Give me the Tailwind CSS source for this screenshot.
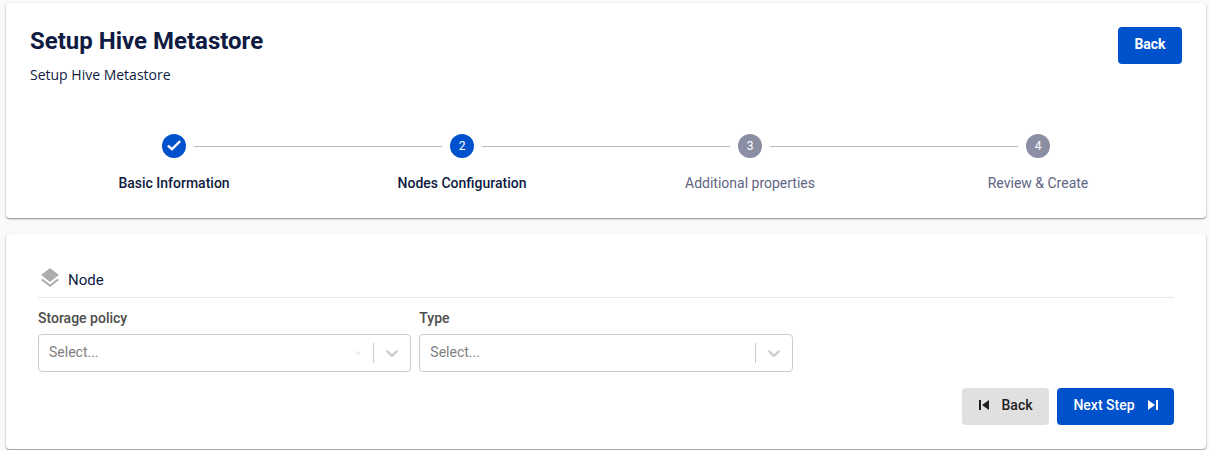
<!DOCTYPE html>
<html lang="en">
<head>
  <meta charset="UTF-8">
  <title>Setup Hive Metastore</title>
  <script src="https://cdn.jsdelivr.net/npm/@tailwindcss/browser@4"></script>
</head>
<body class="bg-[#fafafa] font-['Roboto',sans-serif] text-[#172b4d] h-[450px] overflow-hidden">
  <div class="pl-[6px] pr-[4px] pt-[3px]">
    <!-- header card -->
    <div class="bg-white rounded-[4px] h-[215px] px-6 pt-6 shadow-[0_1px_2px_rgba(0,0,0,0.45)]">
      <div class="flex justify-between items-start">
        <div>
          <h1 class="text-2xl leading-7 font-bold text-[#0f1b42]">Setup Hive Metastore</h1>
          <p class="mt-[10px] text-sm leading-[20px] font-['Open_Sans',sans-serif] text-[#0f1b42]">Setup Hive Metastore</p>
        </div>
        <button class="w-16 h-[37px] pb-1 bg-[#0052cc] rounded-[4px] text-white text-sm font-bold">Back</button>
      </div>
      <!-- stepper -->
      <div class="grid grid-cols-4 mt-[49px]">
        <div class="flex flex-col items-center relative">
          <div class="size-6 rounded-full bg-[#0052cc] flex items-center justify-center">
            <svg width="14" height="14" viewBox="0 0 14 14" fill="none" stroke="#fff" stroke-width="2.4"><path d="M0.8 6.6 5 10.2 13.2 2.2"/></svg>
          </div>
          <span class="mt-[15px] text-sm leading-[20px] font-medium text-[#0f1b42]">Basic Information</span>
        </div>
        <div class="flex flex-col items-center relative">
          <div class="absolute top-[11.5px] left-[calc(-50%+20px)] right-[calc(50%+20px)] h-px bg-[#bdbdbd]"></div>
          <div class="size-6 rounded-full bg-[#0052cc] text-white text-xs flex items-center justify-center">2</div>
          <span class="mt-[15px] text-sm leading-[20px] font-medium text-[#0f1b42]">Nodes Configuration</span>
        </div>
        <div class="flex flex-col items-center relative">
          <div class="absolute top-[11.5px] left-[calc(-50%+20px)] right-[calc(50%+20px)] h-px bg-[#bdbdbd]"></div>
          <div class="size-6 rounded-full bg-[#8c8fa3] text-white text-xs flex items-center justify-center">3</div>
          <span class="mt-[15px] text-sm leading-[20px] text-[#5e6484]">Additional properties</span>
        </div>
        <div class="flex flex-col items-center relative">
          <div class="absolute top-[11.5px] left-[calc(-50%+20px)] right-[calc(50%+20px)] h-px bg-[#bdbdbd]"></div>
          <div class="size-6 rounded-full bg-[#8c8fa3] text-white text-xs flex items-center justify-center">4</div>
          <span class="mt-[15px] text-sm leading-[20px] text-[#5e6484]">Review &amp; Create</span>
        </div>
      </div>
    </div>

    <!-- node card -->
    <div class="mt-4 bg-white rounded-[4px] h-[215px] px-8 pt-[33px] shadow-[0_1px_2px_rgba(0,0,0,0.45)]">
      <div class="flex items-center h-[30px] border-b border-[#e8e8e8] box-content pb-0">
        <svg class="ml-[3px] mt-px mb-[10px]" width="18" height="19" viewBox="3 2 18 19.07" fill="#adadad">
          <path d="m11.99 18.54-7.37-5.73L3 14.07l9 7 9-7-1.63-1.27zM12 16l7.36-5.73L21 9l-9-7-9 7 1.63 1.27z"/>
        </svg>
        <span class="ml-[9px] mb-1 text-[15px] leading-5 text-[#0f1b42]">Node</span>
      </div>
      <div class="grid grid-cols-3 gap-2 mt-[10px]">
        <div>
          <label class="block text-sm leading-5 font-medium text-[#4d4d4d]">Storage policy</label>
          <div class="mt-[6px] h-[38px] border border-[#ccc] rounded-[4px] flex items-center pl-[10px] text-sm text-[#808080]">
            <span class="flex-1 pb-[2px]">Select...</span>
            <span class="size-1 rounded-full bg-[#f0f0f0] mr-[13px]"></span>
            <span class="w-px h-5 bg-[#ccc]"></span>
            <svg class="mx-2" width="20" height="20" viewBox="0 0 20 20" fill="#ccc"><path d="M4.516 7.548c0.436-0.446 1.043-0.481 1.576 0l3.908 3.747 3.908-3.747c0.533-0.481 1.141-0.446 1.574 0 0.436 0.445 0.408 1.197 0 1.615-0.406 0.418-4.695 4.502-4.695 4.502-0.217 0.223-0.502 0.335-0.787 0.335s-0.57-0.112-0.789-0.335c0 0-4.287-4.084-4.695-4.502s-0.436-1.17 0-1.615z"/></svg>
          </div>
        </div>
        <div>
          <label class="block text-sm leading-5 font-medium text-[#4d4d4d]">Type</label>
          <div class="mt-[6px] h-[38px] border border-[#ccc] rounded-[4px] flex items-center pl-[10px] text-sm text-[#808080]">
            <span class="flex-1 pb-[2px]">Select...</span>
            <span class="w-px h-5 bg-[#ccc]"></span>
            <svg class="mx-2" width="20" height="20" viewBox="0 0 20 20" fill="#ccc"><path d="M4.516 7.548c0.436-0.446 1.043-0.481 1.576 0l3.908 3.747 3.908-3.747c0.533-0.481 1.141-0.446 1.574 0 0.436 0.445 0.408 1.197 0 1.615-0.406 0.418-4.695 4.502-4.695 4.502-0.217 0.223-0.502 0.335-0.787 0.335s-0.57-0.112-0.789-0.335c0 0-4.287-4.084-4.695-4.502s-0.436-1.17 0-1.615z"/></svg>
          </div>
        </div>
      </div>
      <div class="flex justify-end gap-2 mt-4">
        <button class="w-[87px] h-[37px] pb-1 bg-[#e0e0e0] rounded-[4px] text-sm font-medium text-[#1f1f1f] flex items-center justify-center gap-[13px]">
          <svg width="10" height="10" viewBox="0 0 10 10" fill="#1f1f1f"><path d="M0 0H2V10H0ZM10 0V10L3 5Z"/></svg>
          Back
        </button>
        <button class="w-[117px] h-[37px] pb-1 bg-[#0052cc] rounded-[4px] text-sm font-medium text-white flex items-center justify-center gap-[13px]">
          Next Step
          <svg width="10" height="10" viewBox="0 0 10 10" fill="#fff"><path d="M0 0V10L7 5ZM8 0H10V10H8Z"/></svg>
        </button>
      </div>
    </div>
  </div>
</body>
</html>
